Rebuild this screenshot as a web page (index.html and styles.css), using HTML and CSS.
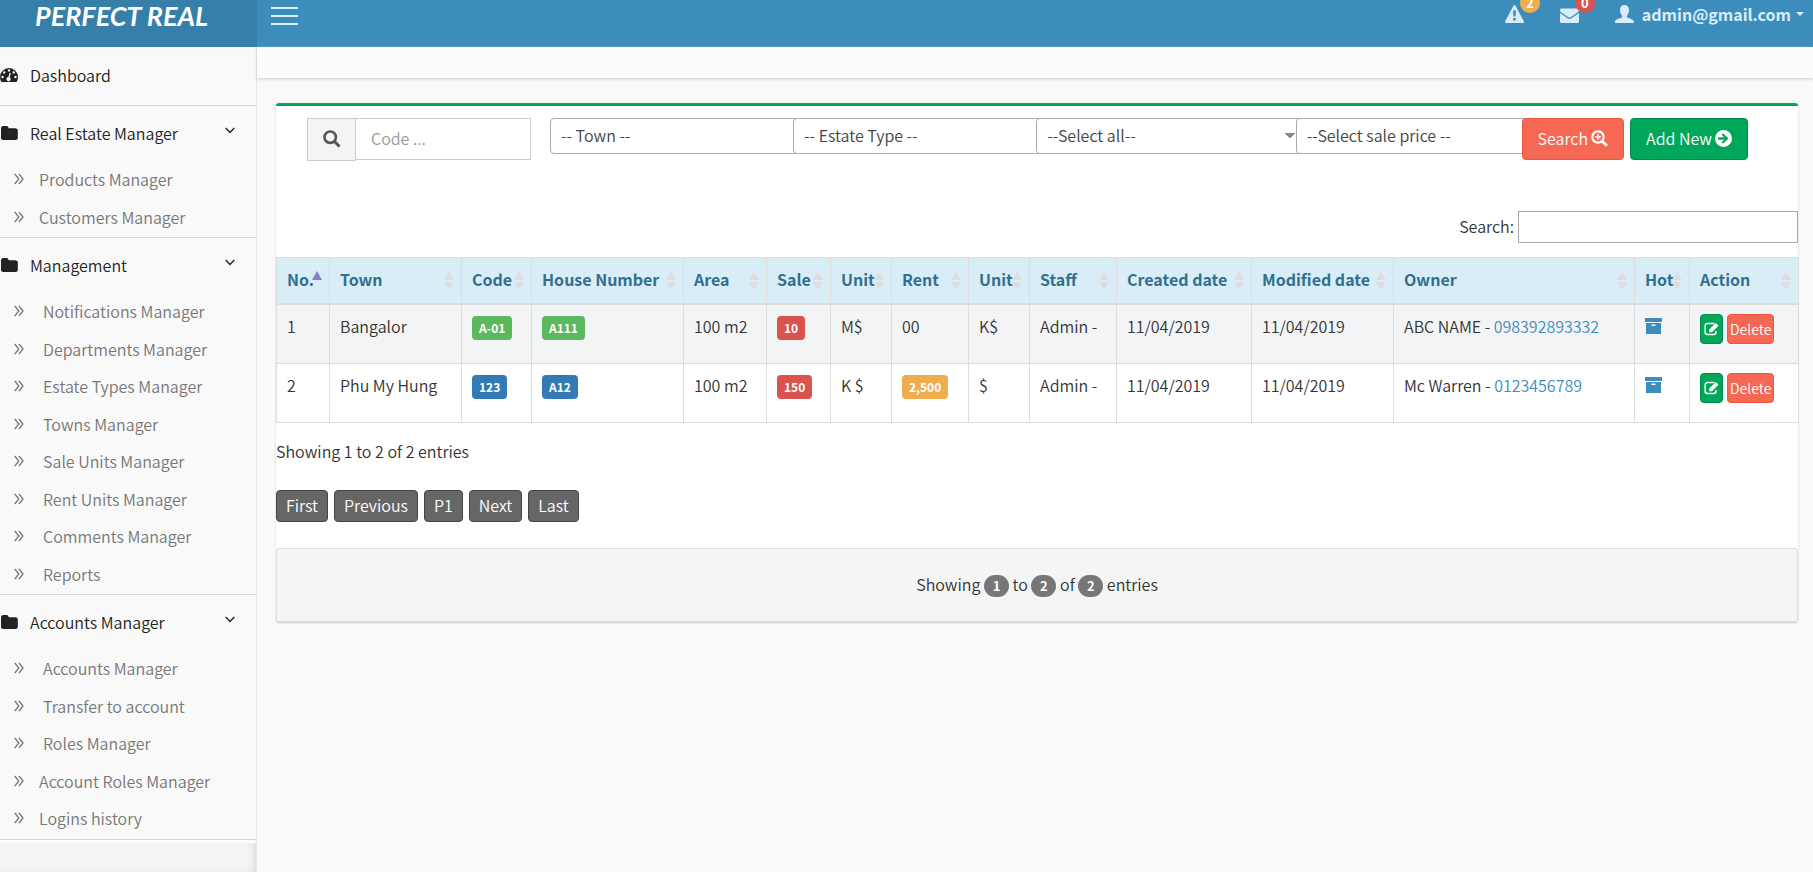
FILE: index.html
```html
<!DOCTYPE html>
<html lang="en">
<head>
<meta charset="utf-8">
<title>Perfect Real</title>
<link rel="stylesheet" href="styles.css">
</head>
<body>
<svg class="sprite" aria-hidden="true">
  <symbol id="folder" viewBox="0 0 17 14"><path d="M0 2.3C0 1 1 0 2.2 0h3.3c1.2 0 2 .9 2 2v.3h7c1.300 0 2.300 1 2.300 2.200v7.200c0 1.300-1 2.300-2.300 2.300H2.200C1 14 0 13 0 11.700z"/></symbol>
  <symbol id="dbl" viewBox="0 0 10 12"><path d="M.8 1l4 5-4 5M5 1l4 5-4 5" fill="none" stroke="currentColor" stroke-width="1.300"/></symbol>
  <symbol id="down" viewBox="0 0 10 7"><path d="M.7 1L5 5.500 9.300 1" fill="none" stroke="currentColor" stroke-width="1.400"/></symbol>
  <symbol id="sort" viewBox="0 0 10 18"><path d="M5 0l5 8H0zM0 10h10l-5 8z"/></symbol>
  <symbol id="box" viewBox="0 0 17 16"><path d="M0 0h17v4H0z"/><path fill-rule="evenodd" d="M1 5h15v11H1zM6.500 6.500v1.500h4V6.500z"/></symbol>
  <symbol id="edit" viewBox="0 0 16 14"><path d="M11 1.200H3.500A2.300 2.300 0 0 0 1.200 3.500v7a2.300 2.300 0 0 0 2.300 2.300h7a2.300 2.300 0 0 0 2.300-2.300V9" fill="none" stroke="currentColor" stroke-width="1.500"/><path d="M5.500 10.500V7.600L12.600.6l2.900 2.900-7 7z"/></symbol>
</svg>
<div class="app">
  <header class="top">
    <a class="logo" href="#">PERFECT REAL</a>
    <nav class="navbar">
      <button class="burger" type="button" aria-label="Toggle navigation"><span></span><span></span><span></span></button>
      <div class="nav-right">
        <a class="notice" href="#" aria-label="Alerts"><svg class="nav-icon" viewBox="0 0 19 18"><path fill-rule="evenodd" d="M8.600.6a1 1 0 0 1 1.800 0l8.400 15.700A1.100 1.100 0 0 1 17.800 18H1.200a1.100 1.100 0 0 1-1-1.700zM8 5.500l.4 6h2.200l.4-6zM8.200 13v2.500h2.600V13z"/></svg><span class="count orange">2</span></a>
        <a class="notice" href="#" aria-label="Messages"><svg class="nav-icon" viewBox="0 0 19 18"><path d="M0 5.500C0 4 .6 3.500 1.500 3.500h16c1 0 1.500.5 1.500 1.500 0 1-.8 2-1.600 2.500L11 12c-1 .7-2 .7-3 0L1.400 7.500C.6 7 0 6.300 0 5.500z"/><path d="M0 8l7.500 5.200c1.300.9 2.700.9 4 0L19 8v8.500c0 .8-.6 1.500-1.500 1.500h-16C.6 18 0 17.300 0 16.500z"/></svg><span class="count red">0</span></a>
        <a class="user" href="#"><svg class="nav-icon" viewBox="0 0 19 18"><path d="M9.500 0C12.500 0 14 2 14 5c0 2.300-.9 4.400-2 5.500v1.700c1 1.200 6 1.500 6.800 3.800l.2 2H0l.2-2C1 13.700 6 13.400 7 12.200v-1.700C5.900 9.400 5 7.300 5 5c0-3 1.500-5 4.500-5z"/></svg><span>admin@gmail.com</span><i class="caret"></i></a>
      </div>
    </nav>
  </header>
  <div class="body">
    <aside class="sidebar">
      <section class="group"><a class="head solo" href="#"><svg class="dash" viewBox="0 0 18 14"><path fill-rule="evenodd" d="M9 0a9 9 0 0 1 9 9c0 1.800-.5 3.500-1.400 5H1.400A9.400 9.400 0 0 1 0 9a9 9 0 0 1 9-9zM9 1.200A1.200 1.200 0 1 0 9 3.600 1.200 1.200 0 0 0 9 1.200zM4.200 3.200a1.200 1.200 0 1 0 0 2.400 1.200 1.200 0 0 0 0-2.400zM13.800 3.200a1.200 1.200 0 1 0 0 2.400 1.200 1.200 0 0 0 0-2.400zM2.500 7.800a1.200 1.200 0 1 0 0 2.400 1.200 1.200 0 0 0 0-2.400zM15.500 7.800a1.200 1.200 0 1 0 0 2.400 1.200 1.200 0 0 0 0-2.400zM9.600 4.800L8.400 9a2.100 2.100 0 1 0 1.300.3l1.200-4.200z"/></svg>Dashboard</a></section>
      <section class="group">
        <a class="head" href="#"><svg class="folder"><use href="#folder"/></svg>Real Estate Manager<svg class="down"><use href="#down"/></svg></a>
        <ul class="items">
          <li><a class="near" href="#"><svg><use href="#dbl"/></svg>Products Manager</a></li>
          <li><a class="near" href="#"><svg><use href="#dbl"/></svg>Customers Manager</a></li>
        </ul>
      </section>
      <section class="group">
        <a class="head" href="#"><svg class="folder"><use href="#folder"/></svg>Management<svg class="down"><use href="#down"/></svg></a>
        <ul class="items">
          <li><a href="#"><svg><use href="#dbl"/></svg>Notifications Manager</a></li>
          <li><a href="#"><svg><use href="#dbl"/></svg>Departments Manager</a></li>
          <li><a href="#"><svg><use href="#dbl"/></svg>Estate Types Manager</a></li>
          <li><a href="#"><svg><use href="#dbl"/></svg>Towns Manager</a></li>
          <li><a href="#"><svg><use href="#dbl"/></svg>Sale Units Manager</a></li>
          <li><a href="#"><svg><use href="#dbl"/></svg>Rent Units Manager</a></li>
          <li><a href="#"><svg><use href="#dbl"/></svg>Comments Manager</a></li>
          <li><a href="#"><svg><use href="#dbl"/></svg>Reports</a></li>
        </ul>
      </section>
      <section class="group">
        <a class="head" href="#"><svg class="folder"><use href="#folder"/></svg>Accounts Manager<svg class="down"><use href="#down"/></svg></a>
        <ul class="items">
          <li><a href="#"><svg><use href="#dbl"/></svg>Accounts Manager</a></li>
          <li><a href="#"><svg><use href="#dbl"/></svg>Transfer to account</a></li>
          <li><a href="#"><svg><use href="#dbl"/></svg>Roles Manager</a></li>
          <li><a class="near" href="#"><svg><use href="#dbl"/></svg>Account Roles Manager</a></li>
          <li><a class="near" href="#"><svg><use href="#dbl"/></svg>Logins history</a></li>
        </ul>
      </section>
    </aside>
    <main class="content">
      <div class="crumbs"></div>
      <div class="panel">
        <form class="filters">
          <div class="code">
            <label class="addon" for="code" aria-label="Code"><svg viewBox="0 0 18 18"><circle cx="7.200" cy="7.200" r="5.700" fill="none" stroke="currentColor" stroke-width="2.600"/><path d="M11.500 11.500l5 5" stroke="currentColor" stroke-width="3"/></svg></label>
            <input id="code" type="text" placeholder="Code ...">
          </div>
          <div class="selects">
            <select class="w1" aria-label="Town"><option>-- Town --</option></select>
            <select class="w1" aria-label="Estate type"><option>-- Estate Type --</option></select>
            <select class="w2" aria-label="Status"><option>--Select all--</option></select>
            <select class="w3" aria-label="Sale price"><option>--Select sale price --</option></select>
          </div>
          <div class="actions">
            <button class="btn coral" type="button">Search <svg viewBox="0 0 18 18"><circle cx="7.400" cy="7.400" r="6" fill="none" stroke="currentColor" stroke-width="2.400"/><path d="M11.800 11.800l5 5" stroke="currentColor" stroke-width="3"/><path d="M7.400 4.300v6.200M4.300 7.400h6.200" stroke="currentColor" stroke-width="1.600"/></svg></button>
            <button class="btn green" type="button">Add New <svg viewBox="0 0 16 16"><path fill-rule="evenodd" d="M8 0a8 8 0 1 1 0 16A8 8 0 0 1 8 0zM7.600 3L6.200 4.400l2.500 2.500H3v2.200h5.700l-2.500 2.500L7.600 13l5-5z"/></svg></button>
          </div>
        </form>
        <div class="find"><label for="find">Search:</label><input id="find" type="search"></div>
        <table class="grid">
          <colgroup><col class="c53"><col class="c132"><col class="c70"><col class="c152"><col class="c83"><col class="c64"><col class="c61"><col class="c77"><col class="c61"><col class="c87"><col class="c135"><col class="c142"><col class="c241"><col class="c55"><col class="c109"></colgroup>
          <thead><tr>
            <th><div class="th asc">No.<i class="up"></i></div></th>
            <th><div class="th">Town<svg><use href="#sort"/></svg></div></th>
            <th><div class="th">Code<svg><use href="#sort"/></svg></div></th>
            <th><div class="th">House Number<svg><use href="#sort"/></svg></div></th>
            <th><div class="th">Area<svg><use href="#sort"/></svg></div></th>
            <th><div class="th">Sale<svg><use href="#sort"/></svg></div></th>
            <th><div class="th">Unit<svg><use href="#sort"/></svg></div></th>
            <th><div class="th">Rent<svg><use href="#sort"/></svg></div></th>
            <th><div class="th">Unit<svg><use href="#sort"/></svg></div></th>
            <th><div class="th">Staff<svg><use href="#sort"/></svg></div></th>
            <th><div class="th">Created date<svg><use href="#sort"/></svg></div></th>
            <th><div class="th">Modified date<svg><use href="#sort"/></svg></div></th>
            <th><div class="th">Owner<svg><use href="#sort"/></svg></div></th>
            <th><div class="th">Hot<svg><use href="#sort"/></svg></div></th>
            <th><div class="th">Action<svg><use href="#sort"/></svg></div></th>
          </tr></thead>
          <tbody>
            <tr><td>1</td><td>Bangalor</td><td><span class="tag ok">A-01</span></td><td><span class="tag ok">A111</span></td><td>100 m2</td><td><span class="tag bad">10</span></td><td>M$</td><td>00</td><td>K$</td><td>Admin -</td><td>11/04/2019</td><td>11/04/2019</td><td>ABC NAME - <a href="#">098392893332</a></td><td><svg class="box"><use href="#box"/></svg></td><td class="act"><div class="row-actions"><button class="mini green" type="button" aria-label="Edit"><svg><use href="#edit"/></svg></button><button class="mini coral" type="button">Delete</button></div></td></tr>
            <tr><td>2</td><td>Phu My Hung</td><td><span class="tag info">123</span></td><td><span class="tag info">A12</span></td><td>100 m2</td><td><span class="tag bad">150</span></td><td>K $</td><td><span class="tag warn">2,500</span></td><td>$</td><td>Admin -</td><td>11/04/2019</td><td>11/04/2019</td><td>Mc Warren - <a href="#">0123456789</a></td><td><svg class="box"><use href="#box"/></svg></td><td class="act"><div class="row-actions"><button class="mini green" type="button" aria-label="Edit"><svg><use href="#edit"/></svg></button><button class="mini coral" type="button">Delete</button></div></td></tr>
          </tbody>
        </table>
        <p class="info-line">Showing 1 to 2 of 2 entries</p>
        <div class="pager"><button type="button">First</button><button type="button">Previous</button><button type="button">P1</button><button type="button">Next</button><button type="button">Last</button></div>
        <div class="summary"><p>Showing <b>1</b> to <b>2</b> of <b>2</b> entries</p></div>
      </div>
    </main>
  </div>
</div>
</body>
</html>
```
FILE: styles.css
```css
* { box-sizing: border-box; }
body {
  margin: 0;
  font-family: "Noto Sans CJK SC", "Noto Sans", sans-serif;
  font-size: 16px;
  font-weight: 350;
  line-height: 26px;
  color: #333;
  background: #f9f9f9;
}
a { color: #3c8dbc; text-decoration: none; }
svg { fill: currentColor; flex: none; }
input, select, button { font: inherit; color: inherit; margin: 0; }
ul, p { margin: 0; padding: 0; list-style: none; }
.sprite { display: none; }
.app { min-height: 100vh; display: flex; flex-direction: column; overflow: hidden; }

/* Top bar */
.top { display: flex; height: 47px; background: #3c8dbc; }
.logo {
  width: 257px;
  padding-right: 14px;
  background: #367fa9;
  color: #fff;
  font-family: "Lato", sans-serif;
  font-style: italic;
  font-weight: 700;
  font-size: 27px;
  line-height: 32px;
  text-align: center;
}
.navbar { flex: 1; height: 31px; display: flex; align-items: center; justify-content: space-between; padding: 0 9px 0 14px; }
.burger { display: flex; flex-direction: column; gap: 6px; width: 27px; padding: 0; border: 0; background: none; }
.burger span { height: 2px; background: #d9f1ff; }
.nav-right { display: flex; align-items: center; padding-bottom: 4px; }
.nav-right a { display: flex; align-items: center; color: #d9edf9; position: relative; }
.nav-icon { width: 19px; height: 18px; }
.notice { margin-right: 36px; }
.count {
  position: absolute;
  left: 15px;
  top: -12px;
  width: 20px;
  height: 20px;
  border-radius: 10px;
  color: #fff;
  font-size: 13px;
  font-weight: 700;
  line-height: 20px;
  text-align: center;
}
.orange { background: #f0ad4e; }
.red { background: #d9534f; }
.user { font-weight: 700; gap: 8px; }
.caret { border: 4px solid transparent; border-top-color: currentColor; border-bottom: 0; margin-left: -3px; }

/* Sidebar */
.body { flex: 1; display: flex; }
.sidebar { width: 257px; border-right: 1px solid #e6e6e6; background: #f4f4f4; box-shadow: inset -4px 0 8px -4px #ccc; }
.group { border-bottom: 1px solid #d5d5d5; background: #f9f9f9; }
.group:last-child { box-shadow: 0 3px #fbfbfb; }
.head { display: flex; align-items: center; height: 56px; color: #222; padding: 0 21px 2px 0; }
.solo { height: 58px; }
.folder { width: 17px; height: 14px; margin: 0 12px 0 1px; }
.dash { width: 18px; height: 14px; margin-right: 12px; }
.down { width: 10px; height: 7px; margin: 0 0 6px auto; }
.items a { display: flex; align-items: center; height: 37px; padding: 0 0 4px 14px; color: #777; }
.items li:nth-child(odd) { margin-bottom: 1px; }
.items svg { width: 10px; height: 12px; margin-right: 19px; }
.items .near svg { margin-right: 15px; }

/* Content */
.content { flex: 1; min-width: 0; }
.crumbs { height: 31px; background: #fcfcfc; box-shadow: 0 1px 3px #ccc; }
.panel { margin: 25px 15px 0 19px; border-top: 3px solid #00a65a; border-radius: 3px; background: #fff; box-shadow: 0 1px 2px #ccc; }
.filters { display: flex; align-items: flex-start; padding: 12px 50px 0 31px; }
.code { display: flex; width: 224px; margin-right: 19px; }
.addon { width: 49px; height: 43px; display: flex; align-items: center; justify-content: center; border: 1px solid #ccc; background: #f4f4f4; color: #555; padding-bottom: 2px; }
.addon svg { width: 18px; height: 18px; }
.code input { flex: 1; min-width: 0; height: 42px; padding: 0 15px 2px; border: 1px solid #ccc; border-left: 0; }
.code input::placeholder { color: #999; opacity: 1; }
.selects { flex: 1; min-width: 0; display: flex; }
.selects select {
  appearance: none;
  min-width: 0;
  height: 36px;
  margin-right: -6px;
  padding: 0 10px 2px;
  border: 1px solid #aaa;
  border-radius: 4px;
  background: #fff;
  color: #444;
}
.selects .w1 { flex: 250 1 0; }
.selects .w2 {
  flex: 268 1 0;
  background: conic-gradient(from 320deg at 50% 100%, #888 80deg, #fff 0) right 6px center / 10px 6px no-repeat #fff;
}
.selects .w3 { flex: 231 1 0; }
.actions { display: flex; gap: 6px; position: relative; }
.btn { display: flex; align-items: center; gap: 3px; height: 42px; padding: 0 15px 2px; border: 1px solid; border-radius: 4px; color: #fff; }
.btn svg { width: 17px; height: 17px; }
.coral { background: #f56954; border-color: #f4543c; color: #fff; }
.green { background: #00a65a; border-color: #008d4c; color: #fff; }
.find { display: flex; justify-content: flex-end; align-items: center; gap: 4px; margin: 50px 0 14px; }
.find label { padding-bottom: 2px; }
.find input { width: 280px; height: 32px; border: 1px solid #a9a9a9; background: #fff; padding: 0 6px; }

/* Table */
.grid { width: 100%; table-layout: fixed; border-collapse: collapse; }
.grid th, .grid td { border: 1px solid #ddd; vertical-align: top; text-align: left; white-space: nowrap; }
.grid th { padding: 8px 4px 11px 10px; border-bottom-width: 2px; background: #d9edf7; color: #31708f; font-weight: 700; }
.grid td { height: 59px; padding: 8px 0 0 10px; }
.grid tbody tr:nth-child(odd) { background: #f3f4f5; }
.th { position: relative; }
.th svg { position: absolute; right: 3px; top: 6px; width: 10px; height: 18px; color: #ddd; }
.th .up { border: 5px solid transparent; border-bottom: 9px solid #8080d0; border-top: 0; position: absolute; right: 3px; top: 5px; }
.c53 { width: 53px; } .c132 { width: 132px; } .c70 { width: 70px; } .c152 { width: 152px; }
.c83 { width: 83px; } .c64 { width: 64px; } .c61 { width: 61px; } .c77 { width: 77px; }
.c87 { width: 87px; } .c135 { width: 135px; } .c142 { width: 142px; } .c241 { width: 241px; }
.c55 { width: 55px; } .c109 { width: 109px; }
.tag { display: block; width: fit-content; margin-top: 3px; padding: 0 7px; border-radius: 4px; color: #fff; font-size: 12px; font-weight: 700; line-height: 24px; }
.ok { background: #5cb85c; }
.info { background: #337ab7; }
.bad { background: #d9534f; }
.warn { background: #f0ad4e; }
.box { display: block; width: 17px; height: 16px; margin-top: 5px; color: #3c8dbc; }
.row-actions { display: flex; gap: 4px; padding-top: 1px; }
.mini { height: 30px; display: flex; align-items: center; padding: 0 3px; border: 1px solid; border-radius: 4px; font-size: 14px; color: #fff; }
.mini.green { border-color: #008d4c; }
.mini.coral { border-color: #f4543c; padding: 0 2px; }
.mini svg { width: 15px; height: 14px; }

/* Footer of the panel */
.info-line { padding: 15px 0 26px; }
.pager { display: flex; gap: 6px; padding-bottom: 26px; }
.pager button { height: 32px; padding: 0 9px 2px; border: 1px solid #444; border-radius: 4px; background: #666; color: #fff; }
.summary { padding: 22px 0 24px; border: 1px solid #ddd; border-radius: 3px; background: #f5f5f5; text-align: center; }
.summary b { display: inline-block; min-width: 25px; border-radius: 11px; background: #777; color: #fff; font-size: 13px; font-weight: 700; line-height: 22px; }
```
